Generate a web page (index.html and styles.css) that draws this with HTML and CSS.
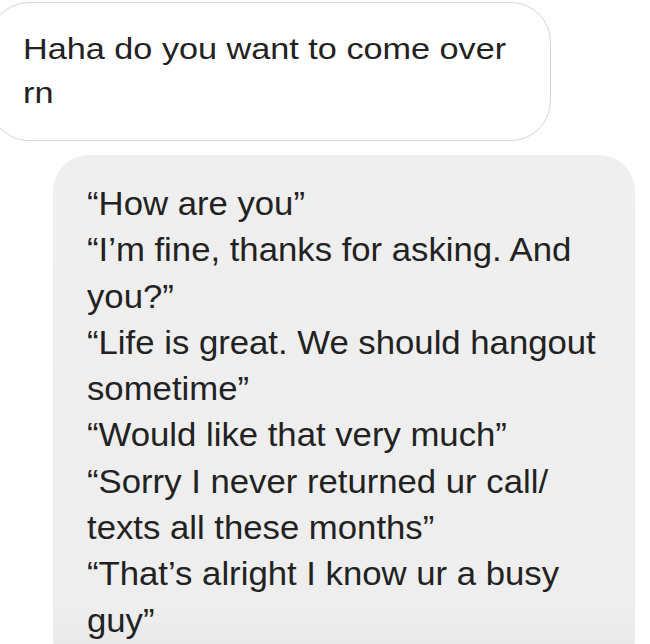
FILE: index.html
```html
<!DOCTYPE html>
<html>
<head>
<meta charset="utf-8">
<link rel="stylesheet" href="styles.css">
</head>
<body>
<div class="thread">
  <div class="bubble incoming"><div class="text">Haha do you want to come over<br>rn</div></div>
  <div class="bubble outgoing">
    <div class="text">
      <p class="line">“How are you”</p>
      <p class="line">“I’m fine, thanks for asking. And<br>you?”</p>
      <p class="line">“Life is great. We should hangout<br>sometime”</p>
      <p class="line">“Would like that very much”</p>
      <p class="line">“Sorry I never returned ur call/<br>texts all these months”</p>
      <p class="line">“That’s alright I know ur a busy<br>guy”</p>
    </div>
  </div>
</div>
</body>
</html>
```
FILE: styles.css
```css
html, body {
  margin: 0;
  padding: 0;
  background: #ffffff;
  overflow: hidden;
}
body {
  width: 650px;
  height: 644px;
  font-family: "Liberation Sans", Arial, sans-serif;
  color: #222222;
}
.thread {
  display: flex;
  flex-direction: column;
  align-items: flex-start;
  padding-top: 2px;
}
.bubble {
  box-sizing: border-box;
  white-space: nowrap;
}
.text {
  transform-origin: left top;
}
.incoming {
  margin-left: -11px;
  width: 562px;
  height: 139px;
  border: 1px solid #d6d6d6;
  border-radius: 40px;
  padding: 24px 0 0 33px;
  font-size: 29.3px;
  line-height: 44px;
  background: #ffffff;
}
.incoming .text {
  transform: scaleX(1.168);
}
.outgoing {
  margin-top: 14px;
  margin-left: 53px;
  width: 582px;
  height: 520px;
  border-radius: 36px;
  padding: 26px 0 0 34px;
  font-size: 32.5px;
  line-height: 46.3px;
  background: linear-gradient(to bottom, #efefef 0, #eeeeee 455px, #e9e9e9 489px, #e6e6e6 520px);
}
.outgoing .text {
  transform: scaleX(1.068);
}
.line {
  margin: 0;
}
```
